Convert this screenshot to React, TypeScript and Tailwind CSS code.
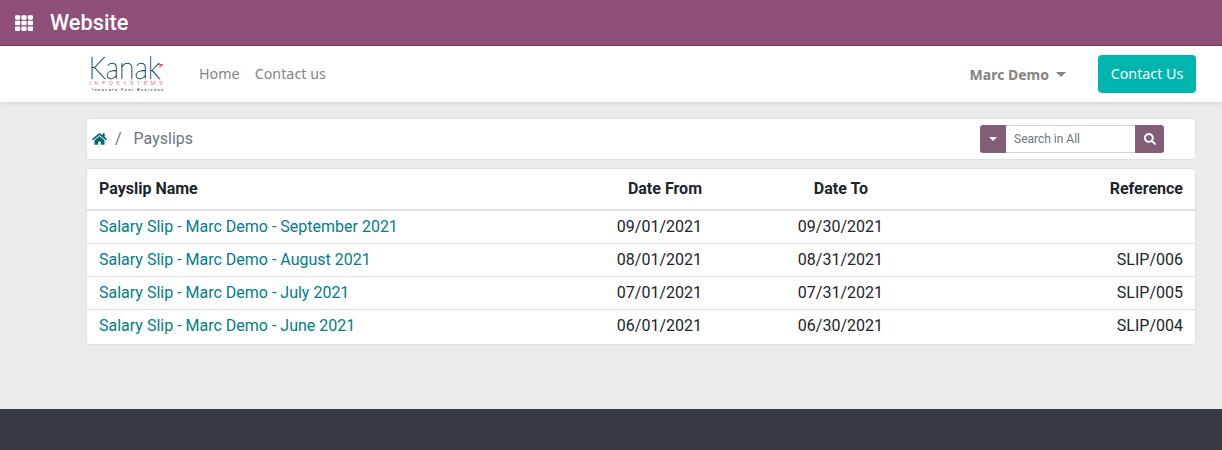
import { FaHome, FaSearch, FaTh } from "react-icons/fa";

const rows = [
  ["Salary Slip - Marc Demo - September 2021", "09/01/2021", "09/30/2021", ""],
  ["Salary Slip - Marc Demo - August 2021", "08/01/2021", "08/31/2021", "SLIP/006"],
  ["Salary Slip - Marc Demo - July 2021", "07/01/2021", "07/31/2021", "SLIP/005"],
  ["Salary Slip - Marc Demo - June 2021", "06/01/2021", "06/30/2021", "SLIP/004"],
];

function Logo() {
  return (
    <svg width="78" height="38" viewBox="0 0 78 38" className="block overflow-visible">
      <text x="0.5" y="24" fontFamily="Lato, sans-serif" fontWeight="100" fontSize="31" textLength="72" lengthAdjust="spacingAndGlyphs" fill="#0b3c6b" stroke="#0b3c6b" strokeWidth="0.45">Kanak</text>
      <path d="M70 9.5h4.5l-2.5 3M74.5 9.5l-3.5 2.5" stroke="#e2202c" strokeWidth="0.8" fill="none" />
      <text x="1.5" y="30" fontFamily="Roboto, sans-serif" fontWeight="300" fontSize="5.5" textLength="73" fill="#e2202c">INFOSYSTEMS</text>
      <text x="4" y="36" fontFamily="Roboto, sans-serif" fontSize="4" textLength="71" fill="#111">Innovate Your Business</text>
    </svg>
  );
}

export default function App() {
  return (
    <div className="h-[450px] w-[1222px] overflow-hidden flex flex-col bg-[#ebebeb] font-['Roboto',sans-serif] text-[#212529]">
      <header className="h-[46px] shrink-0 bg-[#8f4f78] border-b border-[#6b3a5a] flex items-center pl-[15px] text-white">
        <FaTh className="w-[18px] h-[18px]" />
        <span className="ml-[17px] text-[21.8px] font-medium leading-none">Website</span>
      </header>

      <nav className="h-[56px] shrink-0 bg-white shadow-[0_2px_4px_rgba(0,0,0,0.08)] flex items-center pl-[88px] pr-[26px] font-['Noto_Sans',sans-serif]">
        <Logo />
        <div className="ml-[33px] flex gap-[15px] text-[14.3px] text-[#858483]">
          <span>Home</span>
          <span>Contact us</span>
        </div>
        <div className="ml-auto flex items-center text-[14px] font-bold text-[#858483]">
          Marc Demo
          <span className="ml-[7px] w-0 h-0 border-x-[5px] border-x-transparent border-t-[5px] border-t-[#858483]" />
        </div>
        <button className="ml-[32px] w-[98px] h-[38px] rounded-[4px] bg-[#00b5ad] text-white text-[14.3px]">Contact Us</button>
      </nav>

      <main className="flex-1 pt-[16px] pl-[86px] pr-[26px] flex flex-col">
        <div className="h-[42px] bg-white border border-[#dee2e6] rounded-[4px] flex items-center pl-[5px] pr-[31px]">
          <FaHome className="w-[15px] h-[14px] text-[#00696e]" />
          <span className="ml-[8px] text-[#6c757d] text-[16px]">/</span>
          <span className="ml-[12px] text-[16px] text-[#6c757d]">Payslips</span>
          <div className="ml-auto flex h-[28px] text-[12px]">
            <span className="w-[26px] rounded-l-[3px] bg-[#825e78] flex items-center justify-center">
              <span className="w-0 h-0 border-x-[4px] border-x-transparent border-t-[4px] border-t-white" />
            </span>
            <span className="w-[129px] bg-white border-y border-[#ced4da] pl-[8px] flex items-center text-[#6c757d]">Search in All</span>
            <span className="w-[29px] rounded-r-[3px] bg-[#825e78] flex items-center justify-center text-white">
              <FaSearch className="w-[12px] h-[12px]" />
            </span>
          </div>
        </div>

        <div className="mt-[8px] h-[177px] bg-white border border-[#dee2e6] rounded-[4px] text-[16px] overflow-hidden">
          <div className="h-[42px] flex items-center border-b-2 border-[#dee2e6] font-bold px-[12px]">
            <span className="w-[480px]">Payslip Name</span>
            <span className="w-[123px] text-right">Date From</span>
            <span className="w-[166px] text-right">Date To</span>
            <span className="flex-1 text-right">Reference</span>
          </div>
          {rows.map((r, i) => (
            <div key={r[0]} className={"flex items-center px-[12px] " + (i > 0 ? "h-[33px] border-t border-[#dee2e6]" : "h-[32px] pb-[1px]")}>
              <span className="w-[480px] text-[#017e84]">{r[0]}</span>
              <span className="w-[123px] text-right">{r[1]}</span>
              <span className="w-[181px] text-right">{r[2]}</span>
              <span className="flex-1 text-right">{r[3]}</span>
            </div>
          ))}
        </div>
      </main>

      <footer className="h-[41px] shrink-0 bg-[#383b44]" />
    </div>
  );
}
